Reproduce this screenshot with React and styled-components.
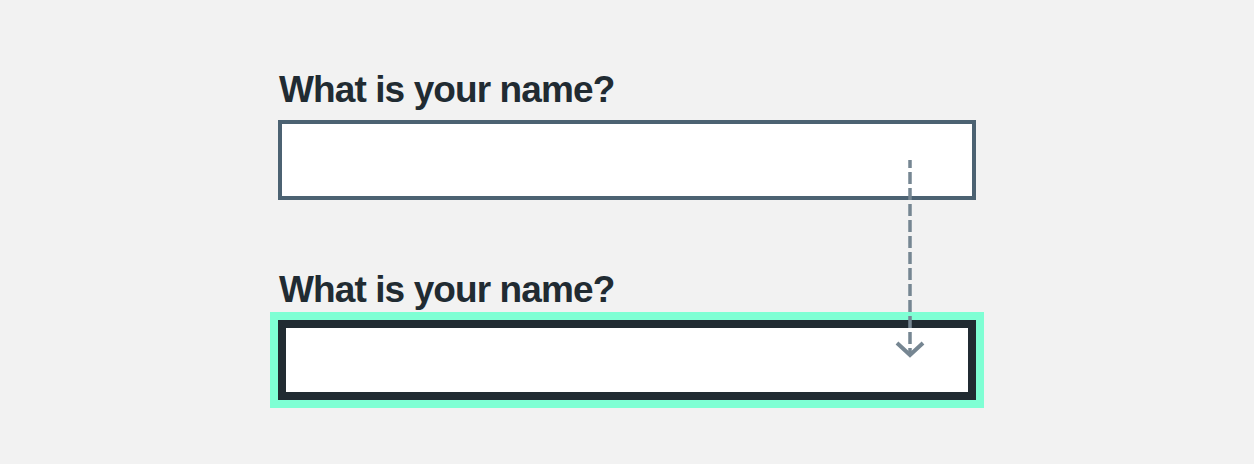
import React from 'react'
import styled, { createGlobalStyle } from 'styled-components'

const GlobalStyle = createGlobalStyle`
  html, body {
    margin: 0;
    padding: 0;
    background: #f2f2f2;
  }
  body {
    font-family: "Liberation Sans", Arial, sans-serif;
  }
`

const Page = styled.div`
  min-height: 464px;
  display: flex;
  justify-content: center;
  padding-top: 68px;
  box-sizing: border-box;
`

const Column = styled.div`
  position: relative;
  width: 698px;
  display: flex;
  flex-direction: column;
  gap: 68px;
`

const Field = styled.div`
  display: flex;
  flex-direction: column;
`

const Label = styled.label`
  font-size: 37px;
  line-height: 44px;
  font-weight: 700;
  letter-spacing: -0.9px;
  color: #212b32;
  margin-bottom: 8px;
  padding-left: 1px;
`

const Input = styled.input`
  box-sizing: border-box;
  width: 100%;
  height: 80px;
  margin: 0;
  padding: 0 12px;
  background: #fff;
  border: ${p => (p.$focused ? '8px solid #212b32' : '4px solid #4c6272')};
  outline: ${p => (p.$focused ? '8px solid #7fffd4' : 'none')};
  border-radius: 0;
  font: inherit;
  font-size: 24px;
`

const Arrow = styled.svg`
  position: absolute;
  left: 617px;
  top: 90px;
  pointer-events: none;
`

export default function App() {
  return (
    <>
      <GlobalStyle />
      <Page>
        <Column>
          <Field>
            <Label htmlFor="name-default">What is your name?</Label>
            <Input id="name-default" type="text" />
          </Field>
          <Field>
            <Label htmlFor="name-focus">What is your name?</Label>
            <Input id="name-focus" type="text" $focused />
          </Field>
          <Arrow width="30" height="206" viewBox="0 0 30 206">
            <line
              x1="15" y1="2" x2="15" y2="198"
              stroke="#768692" strokeWidth="3.5"
              strokeDasharray="8 4 12 4 12 4 12 4 12 4 12 4 12 4 12 4 12 4 12 4 12 4 12 4 12 4 12 4"
            />
            <polyline
              points="2,185 15,197 28,185"
              fill="none" stroke="#768692" strokeWidth="4"
            />
          </Arrow>
        </Column>
      </Page>
    </>
  )
}
